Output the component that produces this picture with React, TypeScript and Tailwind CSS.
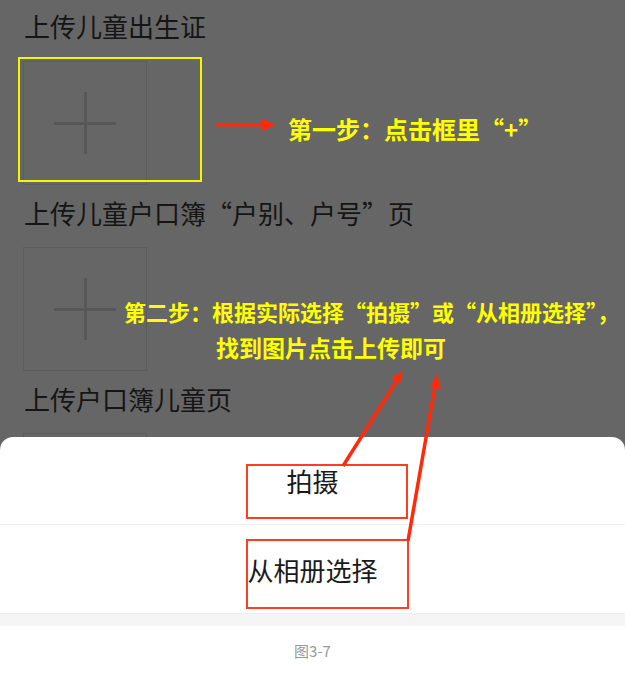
import React from "react";

const cjk = { fontFamily: '"Noto Sans CJK SC", "Noto Sans", sans-serif' };

function UploadBox() {
  return (
    <div className="relative h-[124px] w-[124px] shrink-0 border border-[#5c5c5c]">
      {/* plus sign */}
      <div className="absolute left-[30px] top-[60px] h-[3px] w-[62px] bg-[#575757]" />
      <div className="absolute left-[60px] top-[30px] h-[62px] w-[3px] bg-[#575757]" />
    </div>
  );
}

function Title({ children }: { children: React.ReactNode }) {
  return (
    <div className="h-[36px] pl-px text-[26px] leading-[36px] text-[#151515] whitespace-nowrap [font-feature-settings:'fwid']">
      {children}
    </div>
  );
}

export default function App() {
  return (
    <div className="w-[625px] h-[681px] bg-white" style={cjk}>
      {/* phone screen */}
      <div className="relative h-[626px] overflow-hidden bg-[#666666]">
        <div className="flex flex-col pl-[23px] pt-[8px]">
          <Title>上传儿童出生证</Title>

          {/* step 1 row */}
          <div className="relative mt-[17px] flex items-start">
            <UploadBox />
            <div className="absolute left-[-5px] top-[-4px] h-[125px] w-[184px] border-2 border-[#f5f500]" />
            <svg className="ml-[68px] mt-[58px] shrink-0" width="61" height="12" viewBox="0 0 61 12">
              <line x1="0" y1="6" x2="49" y2="6" stroke="#ff2a0a" strokeWidth="3" />
              <polygon points="61,6 47,0 47,12" fill="#ff2a0a" />
            </svg>
            <div className="ml-[12px] mt-[52px] text-[24px] font-bold leading-[32px] text-[#ffff00] whitespace-nowrap">
              第一步：点击框里“+”
            </div>
          </div>

          <div className="mt-[10px]">
            <Title>上传儿童户口簿“户别、户号”页</Title>
          </div>
          <div className="mt-[16px]">
            <UploadBox />
          </div>
          <div className="mt-[10px]">
            <Title>上传户口簿儿童页</Title>
          </div>
          <div className="mt-[16px]">
            <UploadBox />
          </div>
        </div>

        {/* bottom sheet */}
        <div className="absolute inset-x-0 top-[437px] bottom-0 flex flex-col overflow-hidden rounded-t-[13px] bg-white">
          <div className="relative flex h-[88px] items-center justify-center border-b border-[#eeeeee] text-[26px] text-[#1a1a1a]">
            拍摄
            <div className="absolute left-[246px] top-[27px] h-[55px] w-[162px] border-2 border-[#ff3d24]" />
          </div>
          <div className="relative flex h-[88px] items-center justify-center text-[26px] text-[#1a1a1a]">
            从相册选择
            <div className="absolute left-[246px] top-[14px] h-[70px] w-[163px] border-2 border-[#ff3d24]" />
          </div>
          <div className="flex-1 border-t border-[#eeeeee] bg-[#f5f5f5]" />
        </div>

        {/* step 2 annotation */}
        <div className="absolute left-[124px] top-[296px] text-[22px] font-bold leading-[30px] text-[#ffff00] whitespace-nowrap">
          第二步：根据实际选择“拍摄”或“从相册选择”，
        </div>
        <div className="absolute left-[216px] top-[332px] text-[23px] font-bold leading-[30px] text-[#ffff00] whitespace-nowrap">
          找到图片点击上传即可
        </div>

        <svg className="pointer-events-none absolute inset-0" width="625" height="626" viewBox="0 0 625 626">
          <line x1="343" y1="466" x2="396" y2="382" stroke="#ff2a0a" strokeWidth="3.5" />
          <polygon points="403,371 391,378 400,384" fill="#ff2a0a" />
          <line x1="408" y1="541" x2="435" y2="386" stroke="#ff2a0a" strokeWidth="3.5" />
          <polygon points="437,374 430,387 441,389" fill="#ff2a0a" />
        </svg>
      </div>

      {/* caption */}
      <div className="flex h-[55px] items-center justify-center pb-[4px] text-[15px] text-[#999999]">
        图3-7
      </div>
    </div>
  );
}
